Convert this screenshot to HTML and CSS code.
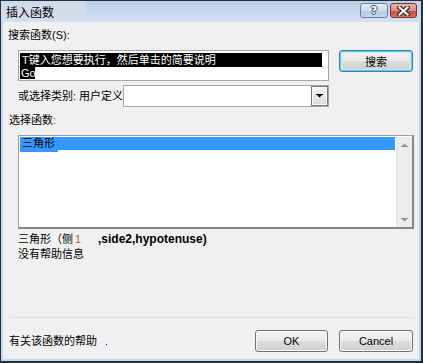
FILE: index.html
```html
<!DOCTYPE html>
<html lang="zh-CN">
<head>
<meta charset="utf-8">
<title>插入函数</title>
<link rel="stylesheet" href="styles.css">
</head>
<body>
<div class="window">
  <div class="titlebar">
    <div class="title">插入函数</div>
    <div class="caption">
      <span class="cbtn cbtn-help">?</span>
      <span class="cbtn cbtn-close">
        <svg width="13" height="10" viewBox="0 0 13 10">
          <path d="M2.5 1.5 L10.5 8.5 M10.5 1.5 L2.5 8.5" stroke="#3e2420" stroke-width="4.4" stroke-linecap="square" fill="none"/>
          <path d="M2.5 1.5 L10.5 8.5 M10.5 1.5 L2.5 8.5" stroke="#ffffff" stroke-width="2.2" stroke-linecap="square" fill="none"/>
        </svg>
      </span>
    </div>
  </div>
  <div class="client">
    <div class="lbl lbl-search">搜索函数(S):</div>
    <div class="search-row">
      <div class="textbox">
        <div class="sel sel1">T键入您想要执行，然后单击的简要说明</div>
        <div class="sel sel2">Go</div>
      </div>
      <button class="btn btn-default btn-search">搜索</button>
    </div>
    <div class="cat-row">
      <span class="cat-label">或选择类别: 用户定义</span>
      <div class="combo">
        <span class="combo-btn">
          <svg width="7" height="4" viewBox="0 0 7 4"><path d="M0 0H7V1H0Z M1 1H6L3.5 3.6Z" fill="#000"/></svg>
        </span>
      </div>
    </div>
    <div class="lbl lbl-func">选择函数<span class="colon">:</span></div>
    <div class="listbox">
      <div class="items">
        <div class="item selected">三角形</div>
        <div class="underbar"></div>
      </div>
      <div class="scrollbar">
        <svg width="7" height="4" viewBox="0 0 7 4"><path d="M3.5 0.4L6 3H1Z M0 3H7V4H0Z" fill="#8e8e8e"/></svg>
        <svg width="7" height="4" viewBox="0 0 7 4"><path d="M0 0H7V1H0Z M1 1H6L3.5 3.6Z" fill="#8e8e8e"/></svg>
      </div>
    </div>
    <div class="sig"><span class="sig-a">三角形（侧</span><span class="num">1</span><b class="sig-b">,side2,hypotenuse)</b></div>
    <div class="desc">没有帮助信息</div>
    <div class="spacer"></div>
    <div class="sep"></div>
    <div class="footer">
      <span class="helplink">有关该函数的帮助</span>
      <span class="dot"></span>
      <div class="btns">
        <button class="btn btn-ok">OK</button>
        <button class="btn btn-cancel">Cancel</button>
      </div>
    </div>
  </div>
</div>
</body>
</html>
```
FILE: styles.css
```css
* { box-sizing: border-box; }
html, body { margin: 0; padding: 0; }
body {
  width: 423px;
  height: 363px;
  overflow: hidden;
  font-family: "Liberation Sans", "Noto Sans CJK SC", sans-serif;
  font-size: 11px;
  color: #000;
  background: #f0f0f0;
}
.window {
  width: 423px;
  height: 363px;
  border-style: solid;
  border-color: #203040;
  border-width: 1px 2px 2px 1px;
  background: #c2d6ec;
  padding: 0 2px 2px 2px;
  display: flex;
  flex-direction: column;
}
.titlebar {
  height: 21px;
  margin: 0 -2px;
  padding: 0 4px 0 0;
  display: flex;
  align-items: flex-start;
  justify-content: space-between;
  background: linear-gradient(#bcd0e8, #d3e1f0);
}
.title {
  width: 85px;
  height: 17px;
  line-height: 21px;
  padding-left: 5px;
  font-family: "Noto Sans CJK SC", sans-serif;
  font-size: 12px;
  background: rgba(214, 222, 232, 0.75);
  white-space: nowrap;
}
.caption {
  display: flex;
  gap: 2px;
  margin-top: 2px;
}
.cbtn {
  height: 15px;
  border-radius: 3px;
  display: flex;
  align-items: center;
  justify-content: center;
}
.cbtn-help {
  width: 28px;
  border: 1px solid #6b7f98;
  background: linear-gradient(#e4edf7 0%, #cddbec 50%, #b6cae2 51%, #c6d8ee 100%);
  color: #fff;
  font-family: "DejaVu Sans", sans-serif;
  font-weight: bold;
  font-size: 11px;
  line-height: 13px;
  text-shadow: 1px 0 #3b4c62, -1px 0 #3b4c62, 0 1px #3b4c62, 0 -1px #3b4c62;
}
.cbtn-close {
  width: 27px;
  border: 1px solid #79372f;
  background: linear-gradient(#ebb6aa 0%, #da8c7e 50%, #c74c3e 51%, #d46e5e 100%);
}
.client {
  flex: 1;
  background: #f0f0f0;
  display: flex;
  flex-direction: column;
  padding: 0 5px 7px 6px;
}
.lbl {
  height: 13px;
  line-height: 13px;
  white-space: nowrap;
}
.lbl-search { margin-top: 7px; margin-left: -1px; }
.search-row {
  margin-top: 8px;
  display: flex;
  align-items: flex-start;
  padding-left: 9px;
}
.textbox {
  width: 311px;
  height: 31px;
  background: #fff;
  border: 1px solid #a7a7a7;
  padding: 1px;
}
.sel {
  background: #000;
  color: #fff;
  white-space: nowrap;
}
.sel1 {
  margin-top: 1px;
  width: 302px;
  height: 14px;
  line-height: 14px;
  padding-left: 2px;
}
.sel2 {
  width: 15px;
  height: 12px;
  line-height: 12px;
  padding-left: 1px;
}
.btn {
  height: 22px;
  padding: 0;
  border: 1px solid #707070;
  border-radius: 3px;
  background: linear-gradient(#f2f2f2 0%, #ebebeb 50%, #dddddd 51%, #cfcfcf 100%);
  box-shadow: inset 0 0 0 1px #fbfbfb;
  font-family: "Liberation Sans", "Noto Sans CJK SC", sans-serif;
  font-size: 11px;
  color: #000;
}
.btn-default {
  border-color: #3c7fb1;
  box-shadow: inset 0 0 0 1px #5cccf6, inset 0 0 0 2px #bfe9fb;
}
.btn-search {
  width: 74px;
  margin-left: 10px;
}
.cat-row {
  margin-top: 4px;
  height: 22px;
  display: flex;
  align-items: center;
  padding-left: 9px;
}
.cat-label {
  width: 105px;
  line-height: 13px;
  white-space: nowrap;
}
.combo {
  width: 206px;
  height: 22px;
  border: 1px solid #a7a7a7;
  background: #fff;
  display: flex;
  justify-content: flex-end;
}
.combo-btn {
  width: 17px;
  height: 20px;
  border: 1px solid #767676;
  background: linear-gradient(#f5f5f5, #dadada);
  box-shadow: inset 0 0 0 1px #fafafa;
  display: flex;
  align-items: center;
  justify-content: center;
}
.lbl-func { margin-top: 7px; }
.colon { color: #6b3a8c; }
.listbox {
  margin-top: 8px;
  margin-left: 9px;
  width: 396px;
  height: 94px;
  border-style: solid;
  border-color: #a0a0a0 #858585 #858585 #a0a0a0;
  border-width: 1px 2px 2px 1px;
  background: #fff;
  display: flex;
  padding-top: 1px;
}
.items {
  flex: 1;
  padding-left: 1px;
}
.item {
  width: 375px;
  height: 13px;
  line-height: 13px;
  padding-left: 2px;
  white-space: nowrap;
}
.item.selected { background: #3399ff; color: #000; }
.underbar {
  width: 38px;
  height: 2px;
  background: #3399ff;
}
.scrollbar {
  width: 16px;
  height: 90px;
  background: #ececec;
  border-left: 1px solid #e4e4e4;
  display: flex;
  flex-direction: column;
  justify-content: space-between;
  align-items: center;
  padding: 6px 0 5px;
}
.sig {
  margin-top: 3px;
  line-height: 15px;
  height: 15px;
  padding-left: 9px;
  display: flex;
  white-space: nowrap;
}
.sig-a { width: 57px; }
.num { width: 23px; color: #c0681c; }
.sig-b { font-weight: bold; font-size: 12px; }
.desc {
  line-height: 15px;
  height: 15px;
  padding-left: 9px;
  white-space: nowrap;
}
.spacer { flex: 1; }
.sep {
  height: 1px;
  background: #d6dfe6;
}
.footer {
  margin-top: 12px;
  height: 22px;
  display: flex;
  align-items: center;
}
.helplink {
  line-height: 13px;
  white-space: nowrap;
}
.dot {
  width: 1px;
  height: 1px;
  background: #0000ff;
  margin-left: 9px;
  align-self: flex-start;
  margin-top: 14px;
}
.btns {
  margin-left: auto;
  margin-right: 1px;
  display: flex;
  gap: 11px;
}
.btn-ok { width: 73px; }
.btn-cancel { width: 74px; }
```
